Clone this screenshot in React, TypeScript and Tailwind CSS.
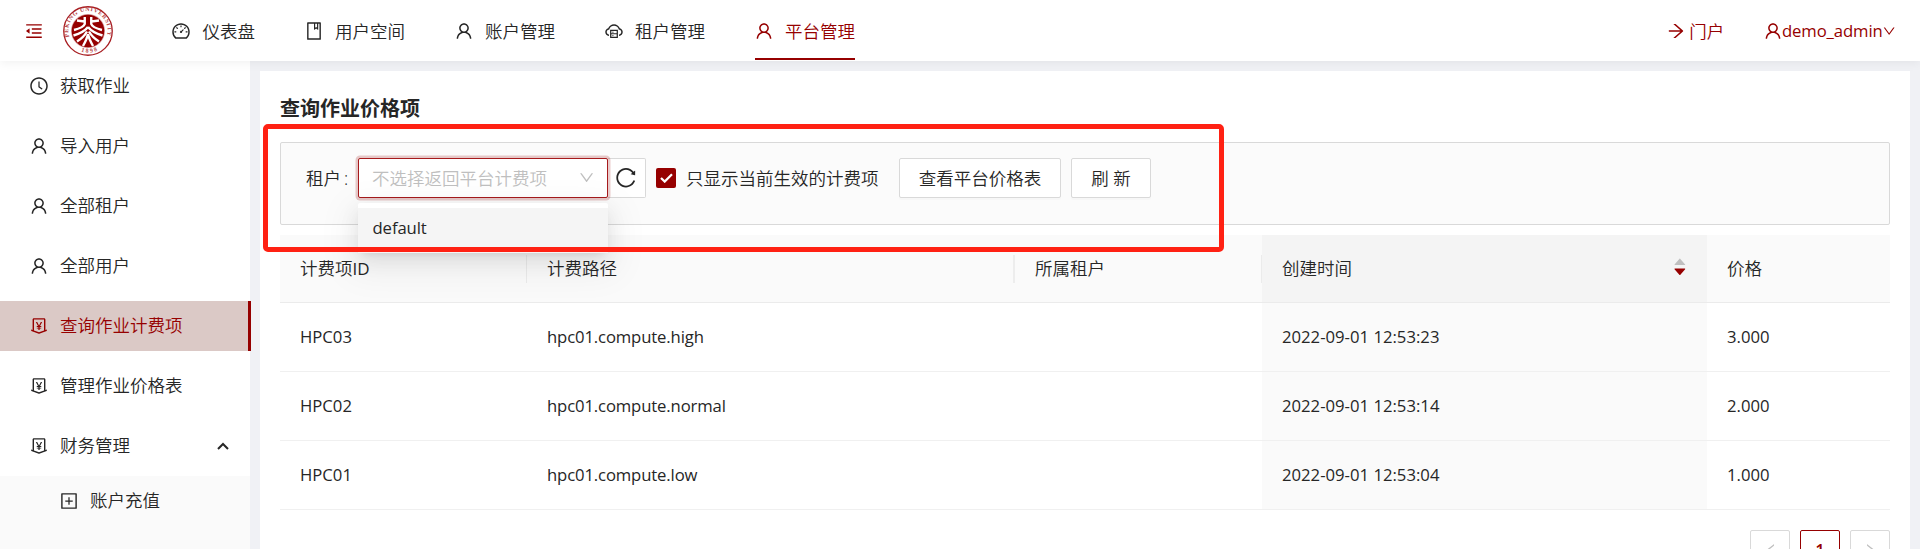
import { ReactNode } from "react";
import {
  AiFillCaretDown,
  AiFillCaretUp,
  AiOutlineArrowRight,
  AiOutlineBook,
  AiOutlineClockCircle,
  AiOutlineCloudServer,
  AiOutlineDashboard,
  AiOutlineDown,
  AiOutlineLeft,
  AiOutlineMenuFold,
  AiOutlineMoneyCollect,
  AiOutlinePlusSquare,
  AiOutlineReload,
  AiOutlineRight,
  AiOutlineUser,
} from "react-icons/ai";

function Latin({ children }: { children: ReactNode }) {
  return <span className="text-[16.7px] font-normal tracking-[-0.1px]">{children}</span>;
}

function Logo() {
  return (
    <svg className="ml-[20px] size-[50px] shrink-0" viewBox="0 0 100 100">
      <circle cx="50" cy="50" r="48.5" fill="#fff" stroke="#a81e22" strokeWidth="2.6" />
      <circle cx="50" cy="50" r="34" fill="#d9a0a0" />
      <circle cx="50" cy="50" r="32.5" fill="#960000" />
      <defs>
        <path id="ringTop" d="M 12.5 62 A 39.5 39.5 0 1 1 87.5 62" />
        <path id="ringBottom" d="M 22 83 A 43 43 0 0 0 78 83" />
      </defs>
      <text fontSize="12" fontWeight="700" fill="#b8484a" fontFamily="Liberation Serif, serif">
        <textPath href="#ringTop" textLength="146">PEKING UNIVERSITY</textPath>
      </text>
      <text fontSize="12" fontWeight="700" fill="#b8484a" fontFamily="Liberation Serif, serif">
        <textPath href="#ringBottom" startOffset="16" textLength="34">1898</textPath>
      </text>
      <g fill="none" stroke="#fff" strokeWidth="4.8">
        <path d="M43.500 22v14C42 41 33 45 22 48M43 31 28 29" />
        <path d="M56.500 22v14C58 41 67 45 78 48M57 31l15-2" />
        <path d="M50 42C44 50 34 55 21 59M50 42c6 8 16 13 29 17" />
        <path d="M48 51C43 60 36 66 28 71M52 51c5 9 12 15 20 20" />
        <path d="M50 56C48 66 44 73 40 80M50 56c2 10 6 17 10 24" />
      </g>
    </svg>
  );
}

const navItems = [
  { icon: AiOutlineDashboard, label: "仪表盘", width: "w-[82.5px]" },
  { icon: AiOutlineBook, label: "用户空间", width: "w-[100px]" },
  { icon: AiOutlineUser, label: "账户管理", width: "w-[100px]" },
  { icon: AiOutlineCloudServer, label: "租户管理", width: "w-[100px]" },
  { icon: AiOutlineUser, label: "平台管理", width: "w-[100px]", active: true },
];

function Header() {
  return (
    <header className="relative z-10 flex h-[61px] shrink-0 bg-white pl-[25px] shadow-[0_2px_10px_rgba(0,0,0,0.06)]">
      <div className="flex items-center">
        <AiOutlineMenuFold className="-m-[1.25px] size-[20px] text-[#960000]" />
        <Logo />
      </div>
      <nav className="ml-[60px] flex gap-[50px]">
        {navItems.map(({ icon: Icon, label, width, active }) => (
          <div
            key={label}
            className={`flex h-[60px] items-center border-b-2 pt-[4px] whitespace-nowrap ${width} ${
              active ? "border-[#960000] text-[#960000]" : "border-transparent"
            }`}
          >
            <Icon className="-m-[1.25px] size-[20px] shrink-0" />
            <span className="ml-[12.5px] pt-px">{label}</span>
          </div>
        ))}
      </nav>
      <div className="ml-auto flex items-center pr-[25px] text-[#960000]">
        <AiOutlineArrowRight className="-m-[1.25px] size-[20px]" />
        <span className="ml-[4.5px] pt-[2px]">门户</span>
        <AiOutlineUser className="-my-[1.25px] -mr-[1.25px] ml-[39px] size-[20px]" />
        <span className="pt-px">
          <Latin>demo_admin</Latin>
        </span>
        <AiOutlineDown className="-mx-[1px] mt-[2px] size-[14.3px]" />
      </div>
    </header>
  );
}

const sideItems = [
  { icon: AiOutlineClockCircle, label: "获取作业" },
  { icon: AiOutlineUser, label: "导入用户" },
  { icon: AiOutlineUser, label: "全部租户" },
  { icon: AiOutlineUser, label: "全部用户" },
  { icon: AiOutlineMoneyCollect, label: "查询作业计费项", active: true },
  { icon: AiOutlineMoneyCollect, label: "管理作业价格表" },
  { icon: AiOutlineMoneyCollect, label: "财务管理", open: true },
];

function Sidebar() {
  return (
    <aside className="flex w-[250px] shrink-0 flex-col bg-white">
      {sideItems.map(({ icon: Icon, label, active, open }) => (
        <div
          key={label}
          className={`mb-[10px] flex h-[50px] shrink-0 items-center pl-[30px] ${
            active
              ? "w-[251px] border-r-[3px] border-[#960000] bg-[#dbc9c6] text-[#960000]"
              : "w-[250px]"
          }`}
        >
          <Icon className="-m-[1.25px] size-[20px]" />
          <span className="ml-[12.5px]">{label}</span>
          {open && (
            <svg className="mr-[21px] ml-auto h-[8px] w-[12px]" viewBox="0 0 12 8" fill="none" stroke="#262626" strokeWidth="2">
              <path d="M1 7 6 2l5 5" />
            </svg>
          )}
        </div>
      ))}
      <div className="-mt-[5px] flex flex-1 items-start bg-[#fafafa] pl-[60px]">
        <div className="flex h-[50px] items-center">
          <AiOutlinePlusSquare className="-m-[1.25px] size-[20px]" />
          <span className="ml-[12.5px]">账户充值</span>
        </div>
      </div>
    </aside>
  );
}

function Filters() {
  return (
    <div className="flex h-[83px] shrink-0 items-start rounded-[2px] border border-[#d9d9d9] bg-[#fbfbfb] pt-[15px] pl-[25px]">
      <div className="flex h-[40px] items-center">
        <span className="w-[52px] pt-[2px]">
          租户<span className="ml-[3px]">:</span>
        </span>
        <div className="relative z-10 flex h-[40px] w-[250px] items-center justify-between rounded-[2px] border border-[#a61b1d] bg-white pr-[12px] pl-[13px] text-[#bfbfbf] shadow-[0_0_0_2.5px_rgba(150,0,0,0.2)]">
          <span className="pt-[2px]">不选择返回平台计费项</span>
          <AiOutlineDown className="size-[17.2px]" />
          <div className="absolute top-[44px] -left-px h-[50px] w-[250px] rounded-[2px] bg-white pt-[5px] text-[#262626] shadow-[0_4px_8px_-5px_rgba(0,0,0,0.12),0_8px_20px_rgba(0,0,0,0.08),0_11px_35px_10px_rgba(0,0,0,0.05)]">
            <div className="flex h-[40px] items-center bg-[#f5f5f5] pl-[14.5px]">
              <Latin>default</Latin>
            </div>
            <div className="h-[5px] bg-[#f5f5f5]" />
          </div>
        </div>
        <button className="flex h-[40px] w-[38px] items-center justify-center rounded-r-[2px] border border-l-0 border-[#d9d9d9] bg-white pr-[2px]">
          <AiOutlineReload className="size-[23.5px]" />
        </button>
        <div className="ml-[10px] flex size-[20px] items-center justify-center rounded-[2px] bg-[#960000]">
          <svg className="h-[10px] w-[13px]" viewBox="0 0 13 10" fill="none" stroke="#fff" strokeWidth="2.2">
            <path d="M1 5l3.7 3.6L12 1.2" />
          </svg>
        </div>
        <span className="ml-[10px] w-[213px] pt-[2px]">只显示当前生效的计费项</span>
        <button className="flex h-[40px] w-[162px] items-center justify-center rounded-[2px] border border-[#d9d9d9] bg-white pt-[2px] shadow-[0_2px_0_rgba(0,0,0,0.016)]">
          查看平台价格表
        </button>
        <button className="ml-[10px] flex h-[40px] w-[80px] items-center justify-center rounded-[2px] border border-[#d9d9d9] bg-white pt-[2px] shadow-[0_2px_0_rgba(0,0,0,0.016)]">
          刷 新
        </button>
      </div>
    </div>
  );
}

const rows = [
  ["HPC03", "hpc01.compute.high", "2022-09-01 12:53:23", "3.000"],
  ["HPC02", "hpc01.compute.normal", "2022-09-01 12:53:14", "2.000"],
  ["HPC01", "hpc01.compute.low", "2022-09-01 12:53:04", "1.000"],
];

const grid = "grid grid-cols-[247px_488px_247px_445px_183px]";
const cell = "flex items-center pl-[20px]";

function Table() {
  return (
    <div className="mt-[10px] flex shrink-0 flex-col">
      <div className={`${grid} h-[68px] border-b border-[#ebebeb] bg-[#fafafa]`}>
        <div className={cell}>
          计费项<span className="text-[17px] font-medium">ID</span>
          <i className="ml-auto h-[28px] w-px bg-[#ebebeb]" />
        </div>
        <div className={cell}>
          计费路径
          <i className="ml-auto h-[28px] w-[2px] bg-[#ededed]" />
        </div>
        <div className={cell}>
          所属租户
          <i className="ml-auto h-[28px] w-px bg-[#ebebeb]" />
        </div>
        <div className={`${cell} bg-[#f4f4f4] pr-[19px]`}>
          创建时间
          <span className="ml-auto flex flex-col items-center pb-[3px]">
            <AiFillCaretUp className="size-[15.7px] text-[#bfbfbf]" />
            <AiFillCaretDown className="-mt-[6px] size-[15.7px] text-[#960000]" />
          </span>
        </div>
        <div className={cell}>价格</div>
      </div>
      {rows.map(([id, path, time, price]) => (
        <div key={id} className={`${grid} h-[69px] border-b border-[#f0f0f0] text-[16.7px] font-normal`}>
          <div className={cell}>{id}</div>
          <div className={`${cell} tracking-[-0.14px]`}>{path}</div>
          <div className={cell} />
          <div className={`${cell} bg-[#fafafa]`}>{time}</div>
          <div className={cell}>{price}</div>
        </div>
      ))}
    </div>
  );
}

function Pagination() {
  return (
    <div className="mt-[20px] flex shrink-0 justify-end gap-[10px]">
      <button className="flex size-[40px] items-center justify-center rounded-[2px] border border-[#d9d9d9] text-[#bfbfbf]">
        <AiOutlineLeft className="size-[17px]" />
      </button>
      <button className="flex size-[40px] items-center justify-center rounded-[2px] border border-[#960000] text-[16.7px] font-semibold text-[#960000]">
        1
      </button>
      <button className="flex size-[40px] items-center justify-center rounded-[2px] border border-[#d9d9d9] text-[#bfbfbf]">
        <AiOutlineRight className="size-[17px]" />
      </button>
    </div>
  );
}

export default function App() {
  return (
    <div className="flex h-[549px] w-[1920px] flex-col overflow-hidden bg-[#f0f1f5] font-['Open_Sans','Noto_Sans_CJK_SC',sans-serif] text-[17.5px] leading-[27.5px] font-[350] text-[#262626]">
      <Header />
      <div className="flex min-h-0 flex-1">
        <Sidebar />
        <main className="relative mt-[10px] ml-[10px] flex w-[1650px] flex-col bg-white px-[20px]">
          <h1 className="mt-[23px] mb-[18px] h-[30px] shrink-0 text-[20px] leading-[30px] font-bold">查询作业价格项</h1>
          <Filters />
          <Table />
          <Pagination />
          <div className="pointer-events-none absolute top-[53px] left-[3px] z-20 h-[128px] w-[961px] rounded-[5px] border-[5px] border-[#ff2113]" />
        </main>
      </div>
    </div>
  );
}
